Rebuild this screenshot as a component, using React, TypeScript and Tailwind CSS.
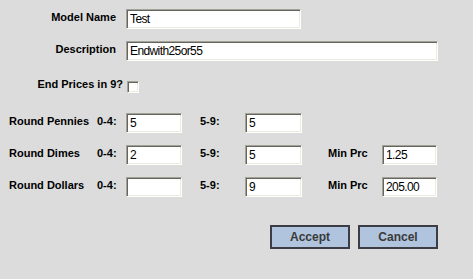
import React from "react";

const field =
  "h-5 bg-white border border-t-[#a3a299] border-l-[#a3a299] border-b-white border-r-white shadow-[inset_1px_1px_0_#66655e,inset_-1px_-1px_0_#ecebdd] pl-[3px] text-[12px] tracking-[-0.6px] text-black outline-none";

const label = "text-[11px] font-bold text-black mb-1 whitespace-nowrap";

const RoundRow = ({
  name,
  low,
  high,
  min,
}: {
  name: string;
  low: string;
  high: string;
  min?: string;
}) => (
  <div className="flex items-center h-5 pl-[9px]">
    <span className={`${label} w-[88px]`}>{name}</span>
    <span className={`${label} w-[29px]`}>0-4:</span>
    <input className={`${field} w-[56px]`} defaultValue={low} />
    <span className={`${label} w-[45px] ml-[18px]`}>5-9:</span>
    <input className={`${field} w-[57px]`} defaultValue={high} />
    {min !== undefined && (
      <>
        <span className={`${label} w-[54px] ml-[26px]`}>Min Prc</span>
        <input className={`${field} w-[55px]`} defaultValue={min} />
      </>
    )}
  </div>
);

export default function App() {
  return (
    <div
      className="w-[473px] h-[279px] bg-[#dcdcdc] pt-[9px] overflow-hidden"
      style={{ fontFamily: '"Liberation Sans", Arial, sans-serif' }}
    >
      <div className="flex items-center h-5">
        <span className={`${label} w-[116px] text-right`}>Model Name</span>
        <input className={`${field} w-[175px] ml-[10px]`} defaultValue="Test" />
      </div>
      <div className="flex items-center h-5 mt-3">
        <span className={`${label} w-[116px] text-right`}>Description</span>
        <input className={`${field} w-[312px] ml-[10px]`} defaultValue="Endwith25or55" />
      </div>
      <div className="flex items-center h-[13px] mt-[19px]">
        <span className={`${label} w-[123px] text-right`}>End Prices in 9?</span>
        <div className="w-3 h-3 ml-1 bg-white border border-t-[#a3a299] border-l-[#a3a299] border-b-white border-r-white shadow-[inset_1px_1px_0_#66655e,inset_-1px_-1px_0_#ecebdd]" />
      </div>

      <div className="flex flex-col gap-3 mt-[20px]">
        <RoundRow name="Round Pennies" low="5" high="5" />
        <RoundRow name="Round Dimes" low="2" high="5" min="1.25" />
        <RoundRow name="Round Dollars" low="" high="9" min="205.00" />
      </div>

      <div className="flex justify-end gap-2 w-[438px] mt-[28px]">
        <button className="w-20 h-6 bg-[#b0c4de] border-2 border-[#3c3c44] text-[12px] font-bold text-[#3a3a3a]">
          Accept
        </button>
        <button className="w-20 h-6 bg-[#b0c4de] border-2 border-[#3c3c44] text-[12px] font-bold text-[#3a3a3a]">
          Cancel
        </button>
      </div>
    </div>
  );
}
